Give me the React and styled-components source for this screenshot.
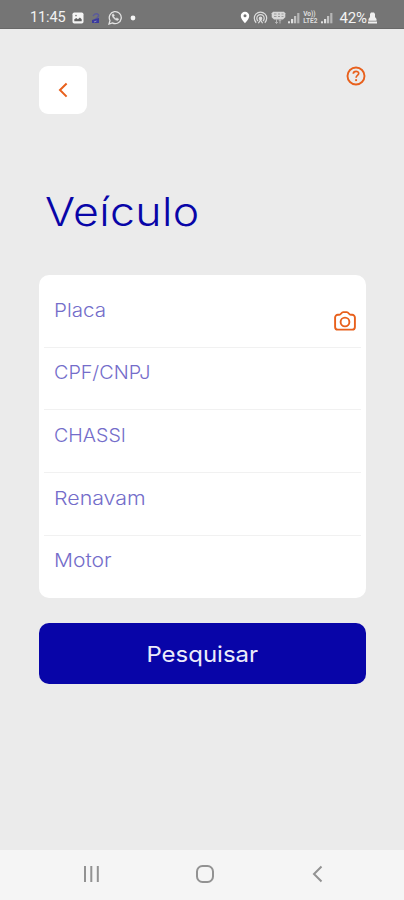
import React from 'react'
import styled, { createGlobalStyle } from 'styled-components'

const orange = '#e8601c'
const blue = '#0805a8'

const GlobalStyle = createGlobalStyle`
  * {
    box-sizing: border-box;
  }
  body {
    margin: 0;
    background: #ebebeb;
    font-family: Inter, 'Liberation Sans', sans-serif;
  }
`

const Screen = styled.div`
  display: flex;
  flex-direction: column;
  width: 404px;
  height: 900px;
  background: #ebebeb;
  overflow: hidden;
`

const StatusBar = styled.header`
  display: flex;
  align-items: center;
  height: 29px;
  padding: 7px 27px 0 30px;
  background: #757575;
  border-bottom: 1px solid #686868;
  color: #f2f2f2;
  font-family: Roboto, sans-serif;
  font-size: 14.5px;
  svg {
    display: block;
    flex: none;
  }
`

const Clock = styled.span`
  width: 36px;
  letter-spacing: -0.1px;
  white-space: nowrap;
`

const StatusIcons = styled.div`
  display: flex;
  align-items: center;
  gap: ${props => props.$gap}px;
  margin-left: ${props => props.$left}px;
`

const Battery = styled.span`
  margin-left: auto;
  margin-right: 1px;
  font-size: 15px;
  letter-spacing: -0.1px;
`

const Content = styled.main`
  flex: 1;
  padding: 37px 38px 0 39px;
`

const TopRow = styled.div`
  display: flex;
  justify-content: space-between;
  align-items: flex-start;
`

const BackButton = styled.button`
  display: flex;
  align-items: center;
  justify-content: center;
  width: 48px;
  height: 48px;
  padding: 0;
  border: none;
  border-radius: 9px;
  background: #fff;
`

const HelpButton = styled.button`
  margin: 0;
  padding: 0;
  border: none;
  background: none;
  line-height: 0;
`

// Inter is narrower than the brand face, so the texts are widened a little
const Title = styled.h1`
  margin: 73px 0 0 6px;
  height: 50px;
  color: ${blue};
  font-size: 40px;
  font-weight: 300;
  letter-spacing: 0.3px;
  line-height: 50px;
  transform: scaleX(1.115);
  transform-origin: left;
`

const Card = styled.section`
  width: 327px;
  height: 323px;
  margin-top: 38px;
  padding: 10px 5px 0;
  border-radius: 10px;
  background: #fff;
`

const Field = styled.div`
  display: flex;
  justify-content: space-between;
  height: 62.7px;
  padding: 12.5px 5px 0 10px;
  border-bottom: 1px solid #f1f1f1;
  &:last-child {
    border-bottom: none;
  }
`

const Label = styled.label`
  color: #746dca;
  font-size: 18.5px;
  font-weight: 300;
  line-height: 25px;
  transform: scaleX(${props => props.$stretch});
  transform-origin: left;
`

const CameraButton = styled(HelpButton)`
  align-self: flex-start;
  margin-top: 13.5px;
`

const SearchButton = styled.button`
  display: block;
  width: 327px;
  height: 61px;
  margin-top: 25px;
  padding: 0;
  border: none;
  border-radius: 10px;
  background: ${blue};
  color: #ececfa;
  font-family: inherit;
  font-size: 22px;
  font-weight: 400;
  span {
    display: inline-block;
    transform: scaleX(1.09);
  }
`

const NavBar = styled.nav`
  display: flex;
  align-items: center;
  justify-content: space-between;
  height: 50px;
  padding: 0 79px 2px 81px;
  background: #f5f5f5;
  svg {
    display: block;
  }
`

const fields = [
  { name: 'Placa', stretch: 1.11, camera: true },
  { name: 'CPF/CNPJ', stretch: 1.07 },
  { name: 'CHASSI', stretch: 1.06 },
  { name: 'Renavam', stretch: 1.155 },
  { name: 'Motor', stretch: 1.14 },
]

const PictureIcon = () => (
  <svg width="12" height="12" viewBox="0 0 12 12">
    <rect x="0.5" y="0.5" width="11" height="11" rx="1.8" fill="#f4f4f4" />
    <path d="M2.3 9.3v-2l2-1.4 1.6 1.4 2-1.8 1.8 1.7v2.1z" fill="#626262" />
    <circle cx="4" cy="3.6" r="0.8" fill="#757575" />
  </svg>
)

const AppIcon = () => (
  <svg width="10" height="12" viewBox="0 0 10 12">
    <path d="M2 4Q4 .8 6.5 2T6 6L3 8" fill="none" stroke="#5a5a9c" strokeWidth="1.4" />
    <path d="M1 8l7-2v5H1z" fill="#3a3a9e" />
    <path d="M3 10l2.5-1" stroke="#8d8db8" />
  </svg>
)

const WhatsAppIcon = () => (
  <svg width="15" height="15" viewBox="0 0 15 15" fill="none" stroke="#e3e3e3">
    <path d="M1 14l1-3.5a6 6 0 1 1 2.4 2.4z" strokeWidth="1.3" />
    <path
      d="M5.1 3.7L4 5c.5 2.8 2.8 5 5.5 5.6l1.4-1.4-2-1.3-1 .8C6.7 8 6 7.2 5.700 6.3l.8-.9z"
      fill="#e3e3e3"
      strokeWidth="0.5"
    />
  </svg>
)

const DotIcon = () => (
  <svg width="6" height="6" viewBox="0 0 6 6">
    <circle cx="3" cy="3" r="2.4" fill="#f5f5f5" />
  </svg>
)

const PinIcon = () => (
  <svg width="10" height="13" viewBox="0 0 10 13">
    <path d="M5 .8A4.2 4.2 0 0 0 .8 5c0 3 4.2 7.3 4.2 7.3S9.200 8 9.200 5A4.2 4.2 0 0 0 5 .8z" fill="#fff" />
    <circle cx="5" cy="4.8" r="1.5" fill="#757575" />
  </svg>
)

const HotspotIcon = () => (
  <svg width="15" height="13" viewBox="0 0 15 13" fill="none" stroke="#ddd" strokeWidth="1.2">
    <path d="M3.2 11.7a6.2 6.2 0 1 1 8.6 0" />
    <path d="M5 10a3.7 3.7 0 1 1 5 0" />
    <circle cx="7.5" cy="7.4" r="1.2" fill="#ddd" />
    <path d="M5.4 12.3l2.1-3.4 2.1 3.4" />
  </svg>
)

const WifiIcon = () => (
  <svg width="15" height="14" viewBox="0 0 15 14">
    <path d="M2 .8h11l1.3 1.5v4L12 8.5H3L.7 6.3v-4z" fill="#d8d8d8" />
    <path d="M3 3h2.5M7 3h2M10.5 3h2M3 5.5h2.5M7 5.5h2M10.5 5.5h2" stroke="#8a8a8a" strokeWidth="0.8" />
    <path d="M5.5 8v4.5M9 8v4.5M4.3 11l1.2 1.5 1.2-1.5M7.8 10L9 8.8l1.2 1.2" fill="none" stroke="#b7b7b7" />
  </svg>
)

const SignalIcon = () => (
  <svg width="12" height="12" viewBox="0 0 12 12" fill="#e0e0e0">
    <rect y="9.3" width="2" height="2" />
    <rect x="3" y="7" width="2.2" height="4.3" />
    <rect x="6" y="4" width="2.2" height="7.3" fill="#c2c2c2" />
    <rect x="9.2" y="1" width="2.2" height="10.3" fill="#b5b5b5" />
  </svg>
)

const Network = styled.span`
  display: flex;
  flex-direction: column;
  width: 15px;
  font-size: 6.5px;
  font-weight: 700;
  line-height: 7px;
  color: #dedede;
`

const ChargeIcon = () => (
  <svg width="9" height="12" viewBox="0 0 9 12" fill="#efefef">
    <path d="M3 .5h3L7 2v3l1.5 2v1.700H.5V7L2 5V2z" />
    <path d="M0 9.500h9v2H0z" />
  </svg>
)

const BackIcon = () => (
  <svg width="12" height="18" viewBox="0 0 12 18" fill="none" stroke={orange} strokeWidth="2">
    <path d="M9.6 2.5L3 9l6.6 6.6" />
  </svg>
)

const HelpIcon = () => (
  <svg width="20" height="20" viewBox="0 0 20 20" fill="none" stroke={orange} strokeWidth="1.9">
    <circle cx="10" cy="10" r="8.5" />
    <path d="M7.3 7.7C7.4 4.5 12.8 4.7 12.700 7.5c-.1 1.9-2.6 2-2.6 4.2" strokeWidth="1.7" />
    <path d="M10.1 13.2v1.9" />
  </svg>
)

const CameraIcon = () => (
  <svg width="22" height="20" viewBox="0 0 22 20" fill="none" stroke={orange} strokeWidth="1.9">
    <path d="M3.8 3.8h1.4c2 0 2-2.700 4-2.700h3.600c2 0 2 2.700 4 2.700h1.400a2.700 2.700 0 0 1 2.700 2.700v9.400a2.700 2.700 0 0 1-2.700 2.700H3.800a2.700 2.700 0 0 1-2.700-2.700V6.500a2.700 2.700 0 0 1 2.700-2.700z" />
    <circle cx="11" cy="11" r="4.4" />
  </svg>
)

const App = () => (
  <Screen>
    <GlobalStyle />
    <StatusBar>
      <Clock>11:45</Clock>
      <StatusIcons $left={6} $gap={7}>
        <PictureIcon />
        <AppIcon />
        <WhatsAppIcon />
        <DotIcon />
      </StatusIcons>
      <StatusIcons $left={104} $gap={2.8}>
        <PinIcon />
        <HotspotIcon />
        <WifiIcon />
        <SignalIcon />
        <Network>
          <span>Vo))</span>
          <span>LTE2</span>
        </Network>
        <SignalIcon />
      </StatusIcons>
      <Battery>42%</Battery>
      <ChargeIcon />
    </StatusBar>
    <Content>
      <TopRow>
        <BackButton aria-label="Voltar">
          <BackIcon />
        </BackButton>
        <HelpButton aria-label="Ajuda">
          <HelpIcon />
        </HelpButton>
      </TopRow>
      <Title>Veículo</Title>
      <Card>
        {fields.map(({ name, stretch, camera }) => (
          <Field key={name}>
            <Label $stretch={stretch}>{name}</Label>
            {camera && (
              <CameraButton aria-label="Câmera">
                <CameraIcon />
              </CameraButton>
            )}
          </Field>
        ))}
      </Card>
      <SearchButton>
        <span>Pesquisar</span>
      </SearchButton>
    </Content>
    <NavBar>
      <svg width="20" height="18" viewBox="0 0 20 18" stroke="#929292" strokeWidth="2">
        <path d="M4 1v16M10.3 1v16M16.8 1v16" />
      </svg>
      <svg width="20" height="20" viewBox="0 0 20 20" fill="none" stroke="#929292" strokeWidth="2">
        <rect x="1" y="2" width="16" height="16" rx="5.5" />
      </svg>
      <svg width="14" height="18" viewBox="0 0 14 18" fill="none" stroke="#929292" strokeWidth="2">
        <path d="M10.5 1.5L3 9l7.5 7.5" />
      </svg>
    </NavBar>
  </Screen>
)

export default App
